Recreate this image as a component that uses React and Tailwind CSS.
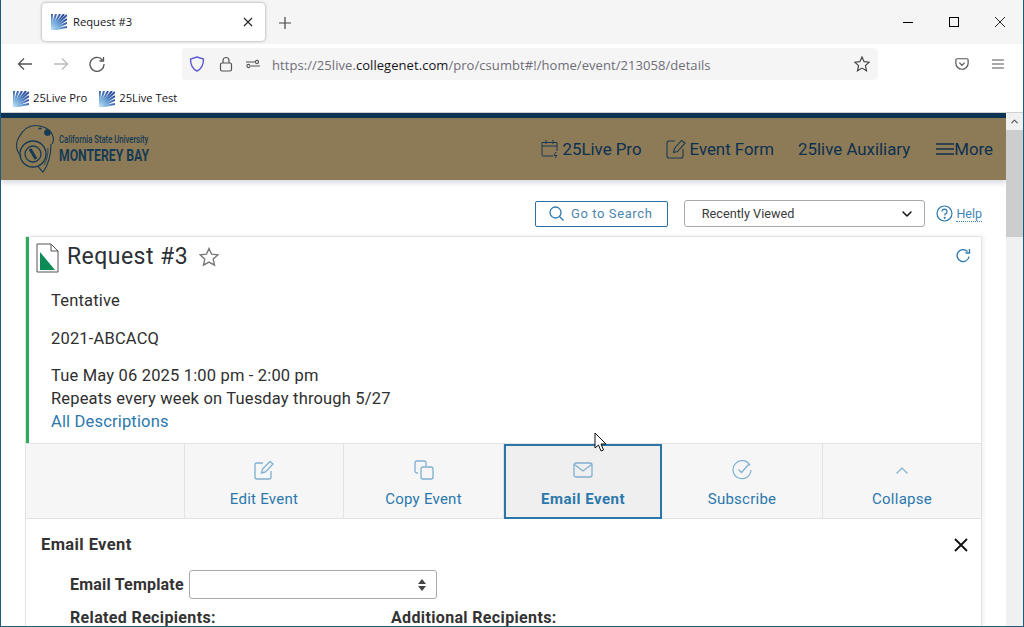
import React from "react";
import { ChevronDown } from "lucide-react";

const rubik = "font-['Roboto',sans-serif]";

function Favicon({ id }) {
  // 25Live sunburst icon
  return (
    <svg width="16" height="16" viewBox="0 0 16 16" className="shrink-0">
      <defs>
        <radialGradient id={id} gradientUnits="userSpaceOnUse" cx="0" cy="16" r="18">
          <stop offset="0" stopColor="#c4e4f5" />
          <stop offset="0.5" stopColor="#6fa5d8" />
          <stop offset="1" stopColor="#2d4f9e" />
        </radialGradient>
      </defs>
      <g stroke={`url(#${id})`} strokeWidth="2">
        <path d="M0 16 L1 0" />
        <path d="M0 16 L5 0" />
        <path d="M0 16 L9 0" />
        <path d="M0 16 L13 0" />
        <path d="M0 16 L16 1" />
        <path d="M0 16 L16 5" />
        <path d="M0 16 L16 9" />
        <path d="M0 16 L16 13" />
      </g>
    </svg>
  );
}

function NavButton({ icon, label, className }) {
  return (
    <div className={`flex items-center ${className || ""}`}>
      {icon}
      <span className="text-[16.85px] pt-[2px] text-[#0c3052] font-['Roboto',sans-serif]">{label}</span>
    </div>
  );
}

function ActionTab({ icon, label, active, width, noBorder }) {
  return (
    <div
      className={
        active
          ? "flex flex-col items-center h-[75px] w-[158px] shrink-0 border-2 border-[#2a76a8] bg-[#efefef] pt-[14px]"
          : `flex flex-col items-center h-[74px] shrink-0 pt-[16px] ${noBorder ? "" : "border-r border-[#e2e2e2]"} ${width}`
      }
    >
      <div className="h-[20px] flex items-center justify-center">{icon}</div>
      <span
        className={`mt-[9px] text-[15px] leading-[20px] text-[#2b78ad] font-['Roboto',sans-serif] ${active ? "font-bold tracking-[0.5px]" : "tracking-[0.25px]"}`}
      >
        {label}
      </span>
    </div>
  );
}

export default function App() {
  return (
    <div className="w-[1024px] h-[627px] overflow-hidden relative border-x border-b border-[#1d5d7c] bg-white flex flex-col">
      {/* tab strip */}
      <div className="h-[44px] bg-[#f5f5f5] flex items-start shrink-0">
        <div className="ml-[41px] mt-[3px] w-[223px] h-[38px] bg-white rounded-[4px] shadow-[0_0_3px_rgba(0,0,0,0.4)] flex items-center pl-[9px] pr-[12px]">
          <Favicon id="fav-tab" />
          <span className="ml-[6px] pt-[1px] text-[11.2px] text-[#15141a] font-['Open_Sans',sans-serif]">Request #3</span>
          <svg width="10" height="10" viewBox="0 0 10 10" className="ml-auto" stroke="#222" strokeWidth="1.1">
            <path d="M1 1 L9 9 M9 1 L1 9" />
          </svg>
        </div>
        <svg width="12" height="12" viewBox="0 0 12 12" className="ml-[14px] mt-[17px]" stroke="#444" strokeWidth="1.2">
          <path d="M6 0 V12 M0 6 H12" />
        </svg>
        <div className="ml-auto flex items-center h-[44px]">
          <div className="w-[46px] flex justify-center">
            <div className="w-[10px] h-px bg-black" />
          </div>
          <div className="w-[46px] flex justify-center">
            <div className="w-[10px] h-[10px] border border-black" />
          </div>
          <div className="w-[46px] flex justify-center">
            <svg width="10" height="10" viewBox="0 0 10 10" stroke="#111" strokeWidth="0.9">
              <path d="M0 0 L10 10 M10 0 L0 10" />
            </svg>
          </div>
        </div>
      </div>

      {/* nav bar */}
      <div className="h-[44px] pb-[4px] flex items-center shrink-0">
        <svg width="16" height="16" viewBox="0 0 16 16" className="ml-[16px]" fill="none" stroke="#555" strokeWidth="1.3">
          <path d="M15 8 H1.5 M7 2.5 L1.5 8 L7 13.5" />
        </svg>
        <svg width="16" height="16" viewBox="0 0 16 16" className="ml-[20px]" fill="none" stroke="#bbb" strokeWidth="1.3">
          <path d="M1 8 H14.5 M9 2.5 L14.5 8 L9 13.5" />
        </svg>
        <svg width="16" height="16" viewBox="0 0 16 16" className="ml-[20px]" fill="none" stroke="#555" strokeWidth="1.3">
          <path d="M13.5 4 A7 7 0 1 0 15 8" />
          <path d="M14.5 1 V5 H10.5" />
        </svg>
        <div className="ml-[77px] w-[696px] h-[32px] bg-[#f5f5f5] rounded-[4px] flex items-center pl-[7px] pr-[8px]">
          <svg width="16" height="16" viewBox="0 0 16 16" fill="none" stroke="#5b5bd6" strokeWidth="1.4">
            <path d="M8 1 L14.5 3 C14.5 9 12.5 13 8 15 C3.5 13 1.5 9 1.5 3 Z" />
          </svg>
          <svg width="16" height="16" viewBox="0 0 16 16" className="ml-[13px]" fill="none" stroke="#555" strokeWidth="1.2">
            <rect x="2.5" y="7" width="11" height="8" rx="1.5" />
            <path d="M5 7 V4.5 A3 3 0 0 1 11 4.5 V7" />
          </svg>
          <svg width="16" height="16" viewBox="0 0 16 16" className="ml-[11px]" fill="none" stroke="#555" strokeWidth="1.1">
            <circle cx="3.5" cy="10" r="1.6" />
            <circle cx="12" cy="6" r="1.6" />
            <path d="M1 6 H10 M6 10 H15" />
          </svg>
          <div className="ml-[11px] pt-[3px] text-[13px] tracking-[0.06px] text-[#6f6d78] font-['Open_Sans',sans-serif] whitespace-nowrap">
            https://25live.<span className="text-[#15141a]">collegenet.com</span>/pro/csumbt#!/home/event/213058/details
          </div>
          <svg width="16" height="16" viewBox="0 0 16 16" className="ml-auto" fill="none" stroke="#444" strokeWidth="1.2">
            <path d="M8 1 L10.1 5.7 L15.2 6.2 L11.4 9.6 L12.5 14.7 L8 12.1 L3.5 14.7 L4.6 9.6 L0.8 6.2 L5.9 5.7 Z" />
          </svg>
        </div>
        <svg width="14" height="14" viewBox="0 0 16 16" className="ml-[77px]" fill="none" stroke="#555" strokeWidth="1.4">
          <path d="M2.5 2 H13.5 A1.5 1.5 0 0 1 15 3.5 V7 A7 7 0 0 1 1 7 V3.5 A1.5 1.5 0 0 1 2.5 2 Z" />
          <path d="M5 6.5 L8 9.5 L11 6.5" />
        </svg>
        <svg width="12" height="10" viewBox="0 0 12 10" className="ml-[23px]" stroke="#555" strokeWidth="1.1">
          <path d="M0 1 H12 M0 5 H12 M0 9 H12" />
        </svg>
      </div>

      {/* bookmarks */}
      <div className="h-[25px] pb-[3px] flex items-center pl-[12px] shrink-0 border-b border-[#d0d0d0]">
        <Favicon id="fav-pro" />
        <span className="ml-[4px] text-[11.2px] text-[#15141a] font-['Open_Sans',sans-serif]">25Live Pro</span>
        <div className="ml-[12px]">
          <Favicon id="fav-test" />
        </div>
        <span className="ml-[4px] text-[11.2px] text-[#15141a] font-['Open_Sans',sans-serif]">25Live Test</span>
      </div>

      {/* page + scrollbar */}
      <div className="flex flex-1 min-h-0">
        <div className="flex-1 min-w-0 flex flex-col">
          <div className="h-[5px] bg-[#0b3353] shrink-0" />
          <div className="h-[62px] bg-[#8c7b56] shrink-0 flex items-center pl-[15px] pr-[12px] shadow-[0_3px_5px_rgba(60,60,110,0.2)]">
            <svg width="40" height="50" viewBox="0 0 40 50" fill="none" stroke="#163a55" strokeWidth="1.1">
              <path d="M5 32 C0 27 -1 19 3 13 C7 6 13 1.5 19 1.5 C25 1.5 33 4 36 10 C38 14 38 17 36 20" />
              <path d="M22 4.5 L26 4.5 M24 3 L24 6" strokeWidth="0.8" />
              <circle cx="31.5" cy="8.5" r="2.8" fill="#163a55" />
              <circle cx="17" cy="30" r="13" strokeWidth="1.3" />
              <circle cx="17" cy="30" r="8" strokeWidth="1.3" />
              <path d="M14 25 L20 35" strokeWidth="3" />
              <path d="M35 20 C35 30 33 40 27 48 C25 46 23 44 22 42" />
              <path d="M32 24 C32 30 31 36 28 41" strokeWidth="0.8" />
            </svg>
            <div className="ml-[3px] flex flex-col text-[#163a55] font-['Roboto',sans-serif] font-bold leading-none whitespace-nowrap">
              <span className="text-[11px] font-medium w-[90px] origin-left scale-x-[0.7]">California State University</span>
              <span className="mt-[3px] text-[16.5px] w-[90px] origin-left scale-x-[0.74]">MONTEREY BAY</span>
            </div>
            <div className="ml-auto flex items-center gap-[24px] pr-[1px]">
              <NavButton
                label="25Live Pro"
                icon={
                  <svg width="18" height="20" viewBox="0 0 18 20" className="mr-[3px]" fill="none" stroke="#1b3a55" strokeWidth="1">
                    <path d="M12 17 H2 A1 1 0 0 1 1 16 V3.5 H16 V12" />
                    <path d="M1 7 H16 M5 1 V5 M12 1 V5" />
                    <path d="M15 13 L13 16.5 H16 L14 19" />
                  </svg>
                }
              />
              <NavButton
                label="Event Form"
                icon={
                  <svg width="20" height="20" viewBox="0 0 20 20" className="mr-[4px]" fill="none" stroke="#1b3a55" strokeWidth="1.1">
                    <path d="M9 2 H3 A2 2 0 0 0 1 4 V17 A2 2 0 0 0 3 19 H15 A2 2 0 0 0 17 17 V10" />
                    <path d="M15.5 1.5 L19 4 L11.5 12.5 L7.5 13.5 L8.5 9.5 Z" />
                  </svg>
                }
              />
              <NavButton label="25live Auxiliary" />
              <NavButton
                className="ml-[2px]"
                label="More"
                icon={
                  <svg width="18" height="14" viewBox="0 0 18 14" stroke="#12304c" strokeWidth="1.6">
                    <path d="M0 2 H18 M0 7 H18 M0 12 H18" />
                  </svg>
                }
              />
            </div>
          </div>

          {/* toolbar */}
          <div className="flex items-center pl-[534px] pr-[24px] mt-[20px] shrink-0">
            <div className="w-[133px] h-[26px] border border-[#2b6f9e] rounded-[2px] flex items-center pl-[13px]">
              <svg width="15" height="15" viewBox="0 0 15 15" fill="none" stroke="#2b78ad" strokeWidth="1.3">
                <circle cx="6.5" cy="6.5" r="5.5" />
                <path d="M10.5 10.5 L14.5 14.5" />
              </svg>
              <span className={`ml-[7px] text-[13px] tracking-[0.6px] text-[#4d86ae] ${rubik}`}>Go to Search</span>
            </div>
            <div className="ml-[16px] w-[242px] h-[27px] border border-[#a9a9a9] rounded-[3px] flex items-center pl-[17px] pr-[9px]">
              <span className={`text-[12.7px] text-[#3a3a3a] ${rubik}`}>Recently Viewed</span>
              <ChevronDown className="ml-auto" size={16} strokeWidth={2.2} color="#111" />
            </div>
            <svg width="17" height="17" viewBox="0 0 17 17" className="ml-[11px]" fill="none" stroke="#2b78ad" strokeWidth="1.2">
              <circle cx="8.5" cy="8.5" r="7.5" />
              <path d="M6 6.5 A2.5 2.5 0 1 1 9 9 V10.5" />
              <circle cx="8.7" cy="12.8" r="0.5" />
            </svg>
            <span className={`ml-[3px] text-[12.5px] leading-[15px] text-[#3f86b8] border-b border-dotted border-[#3f86b8] ${rubik}`}>Help</span>
          </div>

          {/* event card */}
          <div className="ml-[24px] w-[957px] mt-[9px] flex-1 min-h-0 flex flex-col border border-[#e2e2e2] border-b-0 rounded-t-[2px] shadow-[2px_0_4px_rgba(0,0,0,0.06)]">
            <div className="border-l-[3px] border-[#2eaa5c] h-[206px] shrink-0 pl-[7px] pr-[10px] flex flex-col">
              <div className="flex items-center h-[36px] mt-[2px]">
                <svg width="23" height="30" viewBox="0 0 23 30" className="mt-[2px]" fill="none">
                  <path d="M1 1 H15 L22 8 V29 H1 Z" fill="#fff" stroke="#555" strokeWidth="1" />
                  <path d="M15 1 V8 H22" stroke="#555" strokeWidth="1" />
                  <path d="M4 9 L19 27 H4 Z" fill="#0e8a58" />
                </svg>
                <span className={`ml-[8px] text-[23px] tracking-[0.45px] text-[#2b2f36] ${rubik}`}>Request #3</span>
                <svg width="20" height="20" viewBox="0 0 20 20" className="ml-[11px]" fill="none" stroke="#777" strokeWidth="1.4">
                  <path d="M10 1.5 L12.6 7.2 L18.8 7.9 L14.2 12.1 L15.5 18.2 L10 15.1 L4.5 18.2 L5.8 12.1 L1.2 7.9 L7.4 7.2 Z" />
                </svg>
                <svg width="16" height="16" viewBox="0 0 16 16" className="ml-auto mb-[2px]" fill="none" stroke="#2b78ad" strokeWidth="1.3">
                  <path d="M14 8.5 A6 6 0 1 1 12.5 3.5" />
                  <path d="M14.5 1 V5 H10.5" />
                </svg>
              </div>
              <div className={`pl-[15px] text-[16.5px] tracking-[0.17px] text-[#2f2f2f] ${rubik}`}>
                <div className="mt-[14px] leading-[23px]">Tentative</div>
                <div className="mt-[15px] leading-[23px]">2021-ABCACQ</div>
                <div className="mt-[14px] leading-[23px]">Tue May 06 2025 1:00 pm - 2:00 pm</div>
                <div className="leading-[23px]">Repeats every week on Tuesday through 5/27</div>
                <div className="leading-[23px] text-[#2b78ad]">All Descriptions</div>
              </div>
            </div>

            {/* action tabs */}
            <div className="flex h-[74px] shrink-0 bg-[#f6f6f6] border-y border-[#e2e2e2] box-content">
              <ActionTab width="w-[159px]" />
              <ActionTab
                width="w-[159px]"
                label="Edit Event"
                icon={
                  <svg width="20" height="20" viewBox="0 0 20 20" fill="none" stroke="#7fb0d0" strokeWidth="1.3">
                    <path d="M9 3 H3 A2 2 0 0 0 1 5 V17 A2 2 0 0 0 3 19 H15 A2 2 0 0 0 17 17 V11" />
                    <path d="M16 1.5 L19 4 L11.5 12 L7.5 13 L8.5 9 Z" />
                  </svg>
                }
              />
              <ActionTab
                width="w-[160px]"
                label="Copy Event"
                icon={
                  <svg width="20" height="20" viewBox="0 0 20 20" fill="none" stroke="#7fb0d0" strokeWidth="1.3">
                    <path d="M4 13 H3 A2 2 0 0 1 1 11 V3 A2 2 0 0 1 3 1 H10 A2 2 0 0 1 12 3 V6" />
                    <rect x="7" y="7" width="12" height="12" rx="2" />
                  </svg>
                }
              />
              <ActionTab
                active
                label="Email Event"
                icon={
                  <svg width="20" height="16" viewBox="0 0 20 16" fill="none" stroke="#7fb0d0" strokeWidth="1.3">
                    <rect x="1" y="1" width="18" height="14" rx="2" />
                    <path d="M1.5 2.5 L10 9 L18.5 2.5" />
                  </svg>
                }
              />
              <ActionTab
                width="w-[161px]"
                label="Subscribe"
                icon={
                  <svg width="20" height="20" viewBox="0 0 20 20" fill="none" stroke="#7fb0d0" strokeWidth="1.2">
                    <path d="M18 5.5 A9 9 0 1 0 19 10" />
                    <path d="M6.5 9.5 L9.5 12.5 L17 4" />
                  </svg>
                }
              />
              <ActionTab
                width="w-[158px]"
                noBorder
                label="Collapse"
                icon={
                  <svg width="12" height="7" viewBox="0 0 12 7" fill="none" stroke="#7fb0d0" strokeWidth="1.1">
                    <path d="M0.5 6.5 L6 1 L11.5 6.5" />
                  </svg>
                }
              />
            </div>

            {/* email form */}
            <div className={`flex-1 min-h-0 pl-[15px] pr-[13px] text-[#2f2f2f] ${rubik}`}>
              <div className="flex items-center h-[24px] mt-[14px]">
                <span className="text-[16.5px] tracking-[0.4px] font-bold text-[#333]">Email Event</span>
                <svg width="14" height="14" viewBox="0 0 14 14" className="ml-auto mb-[1px]" stroke="#111" strokeWidth="1.8">
                  <path d="M1 1 L13 13 M13 1 L1 13" />
                </svg>
              </div>
              <div className="flex items-center ml-[29px] mt-[13px]">
                <span className="text-[16px] tracking-[0.2px] font-bold text-[#333]">Email Template</span>
                <div className="ml-[5px] w-[248px] h-[29px] border border-[#a9a9a9] rounded-[3px] flex flex-col items-end justify-center pr-[10px] gap-[2px]">
                  <div className="w-0 h-0 border-x-[4px] border-x-transparent border-b-[5px] border-b-[#444]" />
                  <div className="w-0 h-0 border-x-[4px] border-x-transparent border-t-[5px] border-t-[#444]" />
                </div>
              </div>
              <div className="flex ml-[29px] mt-[10px] text-[16px] tracking-[0.35px] font-bold text-[#333] leading-[18px]">
                <span className="w-[321px]">Related Recipients:</span>
                <span>Additional Recipients:</span>
              </div>
            </div>
          </div>
        </div>

        {/* scrollbar */}
        <div className="w-[17px] shrink-0 bg-[#f0f0f0] flex flex-col">
          <div className="h-[17px] flex items-center justify-center">
            <ChevronDown className="rotate-180" size={11} strokeWidth={2.5} color="#555" />
          </div>
          <div className="h-[107px] bg-[#cdcdcd]" />
        </div>
      </div>

      {/* mouse cursor */}
      <svg width="14" height="20" viewBox="0 0 14 20" className="absolute left-[593px] top-[432px]" fill="#fff" stroke="#111" strokeWidth="1">
        <path d="M1 1 V16 L4.5 13 L7 19 L9.5 18 L7 12 L12 12 Z" />
      </svg>
    </div>
  );
}
